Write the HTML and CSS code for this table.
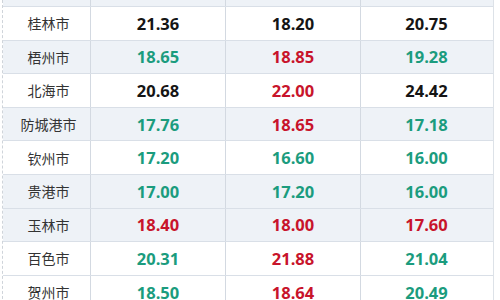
FILE: index.html
```html
<!DOCTYPE html>
<html lang="zh-CN">
<head>
  <meta charset="UTF-8">
  <title>广西各市油价</title>
  <link rel="stylesheet" href="styles.css">
</head>
<body>
  <div class="table">
    <div class="row top stripe"><div></div><div></div><div></div><div></div></div>
    <div class="row"><div class="city">桂林市</div><div class="black">21.36</div><div class="black">18.20</div><div class="black">20.75</div></div>
    <div class="row stripe"><div class="city">梧州市</div><div class="green">18.65</div><div class="red">18.85</div><div class="green">19.28</div></div>
    <div class="row"><div class="city">北海市</div><div class="black">20.68</div><div class="red">22.00</div><div class="black">24.42</div></div>
    <div class="row stripe"><div class="city">防城港市</div><div class="green">17.76</div><div class="red">18.65</div><div class="green">17.18</div></div>
    <div class="row"><div class="city">钦州市</div><div class="green">17.20</div><div class="green">16.60</div><div class="green">16.00</div></div>
    <div class="row stripe"><div class="city">贵港市</div><div class="green">17.00</div><div class="green">17.20</div><div class="green">16.00</div></div>
    <div class="row stripe"><div class="city">玉林市</div><div class="red">18.40</div><div class="red">18.00</div><div class="red">17.60</div></div>
    <div class="row"><div class="city">百色市</div><div class="green">20.31</div><div class="red">21.88</div><div class="green">21.04</div></div>
    <div class="row"><div class="city">贺州市</div><div class="green">18.50</div><div class="red">18.64</div><div class="green">20.49</div></div>
  </div>
</body>
</html>
```

FILE: styles.css
```css
body {
  margin: 0;
  background: #fff;
  font-family: "Open Sans", "Noto Sans CJK SC", sans-serif;
  overflow: hidden;
}
.table {
  margin-left: 2px;
  width: 490px;
  border-left: 1px dashed #cfd4da;
  border-right: 1px solid #dde2e8;
}
.row {
  display: grid;
  grid-template-columns: 88px 135px 135px 131px;
  height: 33.6px;
  box-sizing: border-box;
  border-bottom: 1px solid #d9dfe7;
  background: #fff;
}
.row.top {
  height: 7px;
}
.row.stripe {
  background: #eef2f7;
}
.row > div {
  display: flex;
  align-items: center;
  justify-content: center;
  border-right: 1px solid #d3d9e1;
  font-size: 16.5px;
  font-weight: 700;
}
.row > div:last-child {
  border-right: none;
}
.row > .city {
  font-family: "Noto Sans CJK SC", sans-serif;
  font-size: 14px;
  font-weight: 400;
  color: #333;
  padding-left: 4px;
}
.black {
  color: #151515;
}
.green {
  color: #1b9c7e;
}
.red {
  color: #c8142b;
}
```
